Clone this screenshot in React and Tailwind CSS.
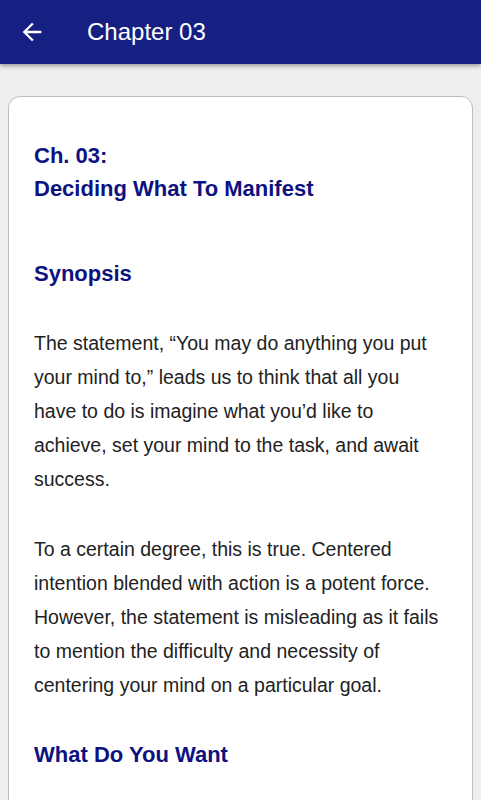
export default function App() {
  return (
    <div
      className="min-h-[800px] bg-[#eeeeee]"
      style={{ fontFamily: '"Liberation Sans", Arial, sans-serif' }}
    >
      {/* App bar */}
      <header className="h-16 bg-[#161f82] flex items-center shadow-[0_2px_4px_rgba(0,0,0,0.35)] relative z-10">
        <button className="ml-[18px] w-7 h-7 flex items-center justify-center text-white">
          <svg width="28" height="28" viewBox="0 0 24 24" fill="currentColor">
            <path d="M20 11H7.83l5.59-5.59L12 4l-8 8 8 8 1.41-1.41L7.83 13H20v-2z" />
          </svg>
        </button>
        <h1 className="ml-[41px] text-[24px] text-white leading-none">Chapter 03</h1>
      </header>

      {/* Chapter content */}
      <div className="px-2 pt-8">
        <div className="bg-white rounded-xl border border-[#bdbdbd] pl-[25px] pr-[29px] pt-[42px] pb-10 min-h-[720px]">
          <h2 className="text-[22px] font-bold leading-[33px] text-[#0d1280]">
            Ch. 03:
            <br />
            Deciding What To Manifest
          </h2>

          <h3 className="mt-[52px] text-[22px] font-bold leading-[33px] text-[#0d1280]">
            Synopsis
          </h3>

          <p className="mt-[36px] text-[19.5px] leading-[34px] text-[#222222]">
            The statement, “You may do anything you put your mind to,” leads us to think that all
            you have to do is imagine what you’d like to achieve, set your mind to the task, and
            await success.
          </p>

          <p className="mt-[36px] text-[19.5px] leading-[34px] text-[#222222]">
            To a certain degree, this is true. Centered intention blended with action is a potent
            force. However, the statement is misleading as it fails to mention the difficulty and
            necessity of centering your mind on a particular goal.
          </p>

          <h3 className="mt-[36px] text-[22px] font-bold leading-[33px] text-[#0d1280]">
            What Do You Want
          </h3>
        </div>
      </div>
    </div>
  );
}
